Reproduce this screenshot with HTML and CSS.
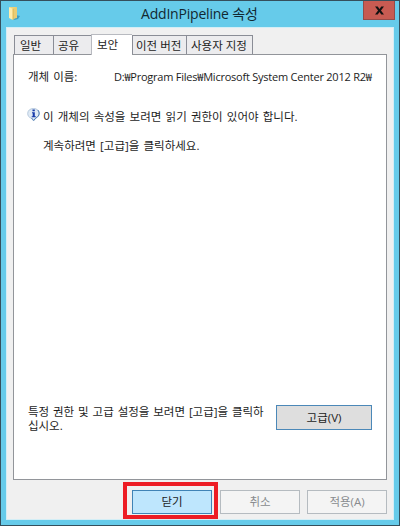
FILE: index.html
```html
<!DOCTYPE html>
<html lang="ko">
<head>
<meta charset="utf-8">
<title>AddInPipeline 속성</title>
<link rel="stylesheet" href="styles.css">
</head>
<body>
<div class="window">
  <header class="titlebar">
    <svg class="folder" width="13" height="15" viewBox="0 0 13 15">
      <path d="M8 9l4 1-2 3-4 1z" fill="#3c9cc0"/>
      <path d="M2 1l6 0 0 11-6 0z" fill="#edd27a"/>
      <path d="M5 2l4-1 0 11-4 1z" fill="#e9cc74"/>
      <path d="M1 1l4 2 0 11-4-2z" fill="#ffedac"/>
      <path d="M5 3v11" stroke="#d7ae47" stroke-width=".8"/>
    </svg>
    <h1 class="title">AddInPipeline 속성</h1>
    <button class="close" aria-label="닫기"><svg width="9" height="9" viewBox="0 0 10 9"><path d="M0 0h3l2 2.700L7 0h3L6.600 4.400 10 9H7L5 6.100 3 9H0l3.400-4.600z" fill="#111"/></svg></button>
  </header>
  <main class="dialog">
    <nav class="tabs">
      <span class="tab general">일반</span>
      <span class="tab share">공유</span>
      <span class="tab active">보안</span>
      <span class="tab versions">이전 버전</span>
      <span class="tab custom">사용자 지정</span>
    </nav>
    <section class="panel">
      <div class="object"><span class="label">개체 이름:</span><span class="path">D:₩Program Files₩Microsoft System Center 2012 R2₩</span></div>
      <div class="notice">
        <svg class="info" width="13" height="14" viewBox="0 0 13 14">
          <path d="M6.500.5c3.400 0 5.800 2 5.800 5 0 2.300-1.300 3.900-3.200 4.600L6.600 13 4.400 10.200C2.100 9.600.7 7.900.7 5.500c0-3 2.400-5 5.800-5z" fill="#dfeaf5" stroke="#a9bfd5" stroke-width=".8"/>
          <path d="M10.800 2c2 2.500 2 5.600-1.700 7.700L6.600 12.400 4.500 10" fill="none" stroke="#527fb5"/>
          <path d="M5.500 1.500h2.300v1.800H5.500zM5 4.300h2.800v4h1v1H4.700v-1h1v-3H5z" fill="#173baa"/>
        </svg>
        <div><p class="message">이 개체의 속성을 보려면 읽기 권한이 있어야 합니다.</p>
        <p class="instruction">계속하려면 [고급]을 클릭하세요.</p></div>
      </div>
      <div class="advanced-row">
        <p class="advanced-text">특정 권한 및 고급 설정을 보려면 [고급]을 클릭하<br>십시오.</p>
        <button class="button advanced">고급(V)</button>
      </div>
    </section>
    <footer class="actions">
      <div class="highlight"><button class="button primary">닫기</button></div>
      <button class="button disabled cancel" disabled>취소</button>
      <button class="button disabled apply" disabled>적용(A)</button>
    </footer>
  </main>
</div>
</body>
</html>
```
FILE: styles.css
```css
* { box-sizing: border-box; }
body, p, h1 { margin: 0; }
body {
  font: 11.5px/14px "Open Sans", "Noto Sans CJK KR", sans-serif;
  color: #1c1c1c;
}
button { font: inherit; padding: 0; }
.window {
  width: 400px;
  height: 526px;
  border: 1px solid #354f5c;
  background: #66cbea;
  padding: 0 5px;
}
.titlebar { height: 26px; display: flex; position: relative; }
.folder { margin: 5px 0 0 2px; }
.title {
  flex: 1;
  padding: 3px 0 0 120px;
  font-size: 14px;
  line-height: 19px;
  font-weight: 400;
  letter-spacing: -.2px;
  white-space: nowrap;
  color: #122831;
}
.close {
  position: absolute;
  right: -1px;
  top: 0;
  width: 32px;
  height: 19px;
  border: 1px solid #944c49;
  border-top: 0;
  background: #c75b52;
  display: flex;
  align-items: center;
  justify-content: center;
}
.dialog {
  height: 493px;
  background: #f0f0f0;
  border: 1px solid #d3eef6;
  padding: 6px 6px 0;
}
.tabs { height: 20px; display: flex; align-items: flex-end; padding-left: 1px; position: relative; }
.tab {
  height: 19px;
  border: 1px solid #8a8d96;
  border-right: 0;
  border-bottom: 0;
  padding: 2px 0 0 5px;
  line-height: 15px;
  background: #ececee;
  white-space: nowrap;
}
.general { width: 39px; }
.share { width: 38px; padding-left: 4px; }
.active { width: 41px; height: 21px; background: #fff; margin-bottom: -1px; border-color: #b8bac0; position: relative; z-index: 1; }
.versions { width: 54px; padding-left: 3px; }
.custom { width: 67px; padding-left: 4px; border-right: 1px solid #8a8d96; }
.panel {
  height: 426px;
  width: 374px;
  border: 1px solid #92959a;
  background: #fff;
  padding: 14px 14px 0 13px;
}
.object { display: flex; height: 39px; line-height: 15px; }
.label { width: 86px; margin-left: 1px; word-spacing: 1px; }
.path { white-space: nowrap; font-size: 11px; letter-spacing: -.23px; }
.notice { display: flex; height: 284px; }
.info { margin-right: 3px; flex: none; }
.message, .instruction, .advanced-text { white-space: nowrap; word-spacing: 1.2px; }
.message { margin-top: 2px; }
.instruction { margin-top: 15px; }
.advanced-row { display: flex; justify-content: space-between; padding-top: 13px; }
.advanced-row .advanced-text { margin-left: 1px; word-spacing: 1px; letter-spacing: -.03px; }
.button {
  height: 24px;
  width: 80px;
  border: 1px solid #9fa3a7;
  background: #dedede;
  color: #1c1c1c;
  text-align: center;
}
.advanced { width: 96px; height: 25px; border-color: #4b88b8; }
.actions { display: flex; align-items: flex-start; margin-left: 110px; }
.highlight {
  width: 95px;
  height: 37px;
  margin-top: 2px;
  border: 4px solid #ed1c24;
  padding: 4px 0 0 5px;
}
.primary { background: #bee6fd; border: 1px solid #3f83b6; }
.disabled { margin-top: 10px; background: #f4f4f4; border-color: #b5bbc0; color: #888b8e; }
.cancel { margin-left: 2px; }
.apply { margin-left: 7px; }
```
